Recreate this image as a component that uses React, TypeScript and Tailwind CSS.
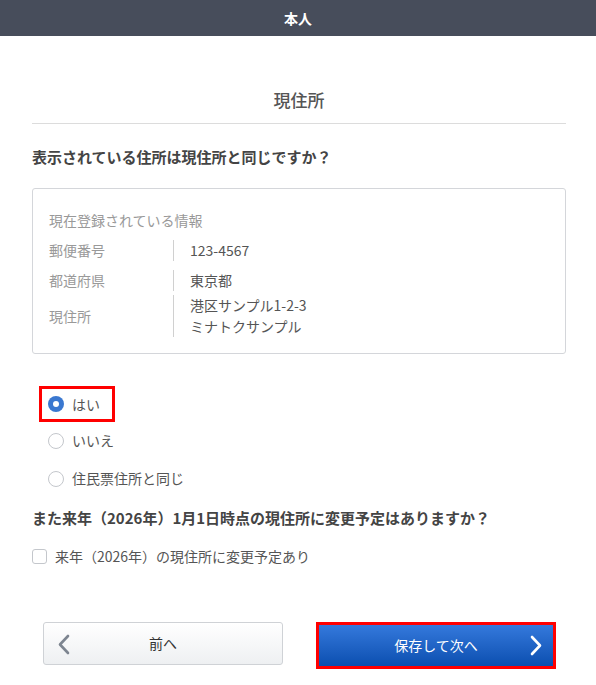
import { useState } from "react";

const font = { fontFamily: '"Noto Sans CJK JP", "Noto Sans", sans-serif' };

function Radio({ checked }: { checked: boolean }) {
  return checked ? (
    <span className="flex h-4 w-4 items-center justify-center rounded-full bg-[#3a78d0]">
      <span className="h-[6px] w-[6px] rounded-full bg-white" />
    </span>
  ) : (
    <span className="h-4 w-4 rounded-full border border-[#c4c7cc] bg-white" />
  );
}

export default function App() {
  const [choice, setChoice] = useState("yes");
  const [change, setChange] = useState(false);

  const options = [
    { id: "yes", label: "はい" },
    { id: "no", label: "いいえ" },
    { id: "same", label: "住民票住所と同じ" },
  ];

  return (
    <div className="min-h-[685px] w-[596px] bg-white text-[#555]" style={font}>
      {/* Header */}
      <header className="flex h-9 items-center justify-center bg-[#474d5b] text-[14px] font-bold text-white">
        本人
      </header>

      <main className="pl-8 pr-[30px]">
        <h1 className="mt-[51px] border-b border-[#dcdcdc] pb-[11px] text-center text-[17px] font-medium leading-[25px] text-[#555]">
          現住所
        </h1>

        <h2 className="mt-[22px] text-[15px] font-bold leading-[22px] text-[#444]">
          表示されている住所は現住所と同じですか？
        </h2>

        {/* Current info card */}
        <section className="mt-[20px] rounded-[3px] border border-[#d4d6da] px-[16px] pb-[16px] pt-[21px] text-[14px] leading-[21px]">
          <p className="text-[#999]">現在登録されている情報</p>
          <div className="mt-[9px] flex">
            <div className="w-[125px] border-r border-[#d0d0d0] text-[#999]">郵便番号</div>
            <div className="pl-4 text-[#555]">123-4567</div>
          </div>
          <div className="mt-[9px] flex">
            <div className="w-[125px] border-r border-[#d0d0d0] text-[#999]">都道府県</div>
            <div className="pl-4 text-[#555]">東京都</div>
          </div>
          <div className="mt-[4px] flex">
            <div className="flex w-[125px] items-center border-r border-[#d0d0d0] text-[#999]">現住所</div>
            <div className="pl-4 leading-[21px] text-[#555]">
              港区サンプル1-2-3
              <br />
              ミナトクサンプル
            </div>
          </div>
        </section>

        {/* Radios */}
        <div className="mt-[32px] flex flex-col items-start text-[14px] leading-[21px]">
          {options.map((o, i) => (
            <label
              key={o.id}
              onClick={() => setChoice(o.id)}
              className={
                i === 0
                  ? "ml-[7px] flex h-[36px] w-[76px] cursor-pointer items-center gap-[8px] border-[3px] border-[#ff0000] pl-[6px]"
                  : "ml-[16px] flex cursor-pointer items-center gap-[8px] " + (i === 1 ? "mt-[8px]" : "mt-[17px]")
              }
            >
              <Radio checked={choice === o.id} />
              <span className="text-[#555]">{o.label}</span>
            </label>
          ))}
        </div>

        <h2 className="mt-[18px] text-[15px] font-bold leading-[22px] text-[#444]">
          また来年（2026年）1月1日時点の現住所に変更予定はありますか？
        </h2>

        <label
          className="mt-[17px] flex cursor-pointer items-center gap-[8px] text-[14px] leading-[21px]"
          onClick={() => setChange(!change)}
        >
          <span
            className={
              change
                ? "h-[15px] w-[15px] rounded-[3px] border border-[#3a78d0] bg-[#3a78d0]"
                : "h-[15px] w-[15px] rounded-[3px] border border-[#c4c7cc] bg-white"
            }
          />
          <span className="text-[#555]">来年（2026年）の現住所に変更予定あり</span>
        </label>

        {/* Buttons */}
        <div className="mt-[55px] flex items-start">
          <button className="relative ml-[11px] flex h-[43px] w-[240px] items-center justify-center rounded-[3px] border border-[#cfd2d6] bg-gradient-to-b from-white to-[#eef0f2] text-[14px] text-[#333]">
            <svg className="absolute left-[13px] top-[11px]" width="13" height="21" viewBox="0 0 13 21" fill="none">
              <path d="M11 2 L3 10.5 L11 19" stroke="#7d8590" strokeWidth="2.6" strokeLinecap="round" strokeLinejoin="round" />
            </svg>
            前へ
          </button>
          <div className="ml-[33px] border-[3px] border-[#ff0000]">
            <button className="relative flex h-[41px] w-[234px] items-center justify-center bg-gradient-to-b from-[#3479dc] to-[#0a4fb0] text-[14px] text-white">
              保存して次へ
              <svg className="absolute right-[10px] top-[10px]" width="13" height="21" viewBox="0 0 13 21" fill="none">
                <path d="M2 2 L10 10.5 L2 19" stroke="#ffffff" strokeWidth="2.6" strokeLinecap="round" strokeLinejoin="round" />
              </svg>
            </button>
          </div>
        </div>
      </main>
    </div>
  );
}
